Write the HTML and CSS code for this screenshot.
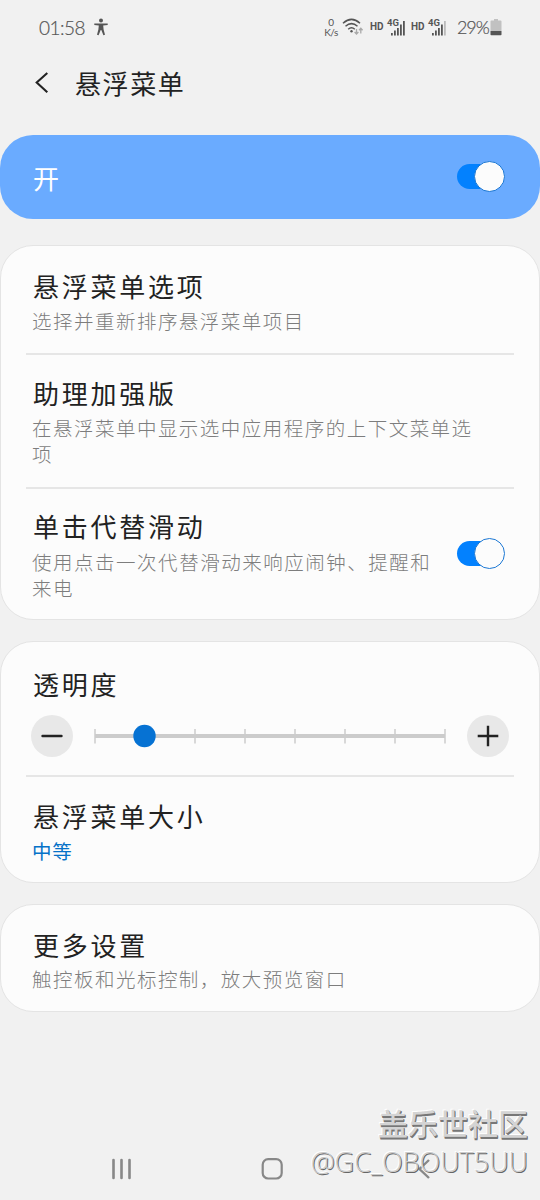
FILE: index.html
```html
<!DOCTYPE html>
<html lang="zh-CN">
<head>
<meta charset="utf-8">
<title>悬浮菜单</title>
<link rel="stylesheet" href="styles.css">
</head>
<body>
<div class="screen">
  <div class="status">
    <span class="clock">01:58</span>
    <svg class="person" width="14" height="18" viewBox="0 0 14 18" fill="#555"><circle cx="7" cy="2.500" r="2"/><path d="M.3 5.500h13.400v1.500l-4.500.5.4 4 1.400 5.200-1.600.5L7.300 12h-.6l-2.100 5.200-1.600-.5 1.400-5.200.4-4-4.500-.5z"/></svg>
    <span class="rate"><span>0</span><span>K/s</span></span>
    <svg class="wifi" width="22" height="18" viewBox="0 0 22 18" fill="none" stroke="#555" stroke-width="1.500"><path d="M1 5.200q8.500-7.600 17 0M3.500 8.300q6-5.300 12 0M6.200 11.200q3.300-2.800 6.600 0"/><circle cx="9.500" cy="13.300" r="1.200" fill="#555" stroke="none"/><path stroke="#aaa" stroke-width="1.300" d="M14.500 11v5M12.600 14l1.900 2 1.900-2M18.800 15.500v-5M17 12.300l1.800-2 1.800 2"/></svg>
    <span class="hd">HD</span>
    <span class="signal"><svg width="20" height="17" viewBox="0 0 20 17" fill="#555"><path d="M5 14h1.800v2.500H5zM8 11.500h1.800v5H8zM11 9h1.800v7.500H11zM14 5.500h1.800v11H14zM17 2h1.800v14.500H17z"/></svg><b>4G</b></span>
    <span class="hd">HD</span>
    <span class="signal"><svg width="20" height="17" viewBox="0 0 20 17" fill="#555"><path d="M5 14h1.800v2.500H5zM8 11.500h1.800v5H8zM11 9h1.800v7.500H11zM14 5.500h1.800v11H14z"/><path fill="#bbb" d="M17 2h1.800v14.500H17z"/></svg><b>4G</b></span>
    <span class="percent">29%</span>
    <svg class="battery" width="12" height="17" viewBox="0 0 12 17"><path fill="#c1c1c1" d="M4 0h4v1.500h2.500q1 0 1 1V12H.5V2.500q0-1 1-1H4z"/><path fill="#555" d="M.5 12h11v3.500q0 .8-.8.8H1.300q-.8 0-.8-.8z"/></svg>
  </div>

  <header class="header">
    <svg width="14" height="22" viewBox="0 0 14 22" fill="none" stroke="#222" stroke-width="2.100"><path d="M12.300 1 1.700 10.500l10.600 9.700"/></svg>
    <h1>悬浮菜单</h1>
  </header>

  <section class="master">
    <span class="master-label">开</span>
    <span class="toggle"></span>
  </section>

  <section class="card card-options">
    <div class="row">
      <div class="title">悬浮菜单选项</div>
      <div class="sub">选择并重新排序悬浮菜单项目</div>
    </div>
    <div class="row row-assistant">
      <div class="title">助理加强版</div>
      <div class="sub"><div>在悬浮菜单中显示选中应用程序的上下文菜单选</div><div>项</div></div>
    </div>
    <div class="row row-tap">
      <div>
        <div class="title">单击代替滑动</div>
        <div class="sub"><div>使用点击一次代替滑动来响应闹钟、提醒和</div><div>来电</div></div>
      </div>
      <span class="toggle"></span>
    </div>
  </section>

  <section class="card card-look">
    <div class="row row-slider">
      <div class="title">透明度</div>
      <div class="slider">
        <span class="round"><svg width="22" height="22" viewBox="0 0 22 22"><path d="M1.500 11h19" stroke="#222" stroke-width="2.400" stroke-linecap="round"/></svg></span>
        <svg class="track" width="354" height="26" viewBox="0 0 354 26"><path d="M2 13h350" stroke="#ccc" stroke-width="4"/><path d="M2 6v14.500M102 6v14.500M152 6v14.500M202 6v14.500M252 6v14.500M302 6v14.500M352 6v14.500" stroke="#ccc" stroke-width="1.500"/><circle cx="51.500" cy="13" r="11.200" fill="#0672d3"/></svg>
        <span class="round"><svg width="22" height="22" viewBox="0 0 22 22"><path d="M.7 11h20.600M11 .7v20.600" stroke="#222" stroke-width="2.400"/></svg></span>
      </div>
    </div>
    <div class="row row-size">
      <div class="title">悬浮菜单大小</div>
      <div class="sub value">中等</div>
    </div>
  </section>

  <section class="card card-more">
    <div class="row">
      <div class="title">更多设置</div>
      <div class="sub">触控板和光标控制，放大预览窗口</div>
    </div>
  </section>

  <nav class="nav">
    <svg width="22" height="22" viewBox="0 0 22 22" stroke="#888" stroke-width="2.600" stroke-linecap="round"><path d="M3.500 2v18M11.500 2v18M19.500 2v18"/></svg>
    <svg width="22" height="22" viewBox="0 0 22 22" fill="none" stroke="#888" stroke-width="2.200"><rect x="1.700" y="1.200" width="19" height="19.300" rx="5.500"/></svg>
    <svg width="14" height="22" viewBox="0 0 14 22" fill="none" stroke="#888" stroke-width="2.400"><path d="M12 2 2.500 11l9.500 9"/></svg>
  </nav>

  <div class="watermark">
    <div class="mark-name">盖乐世社区</div>
    <div class="mark-user">@GC_OBOUT5UU</div>
  </div>
</div>
</body>
</html>
```
FILE: styles.css
```css
* { box-sizing: border-box; }
body { margin: 0; background: #f1f1f1; }
.screen {
  position: relative;
  width: 540px;
  height: 1200px;
  overflow: hidden;
  display: flex;
  flex-direction: column;
  font-family: "Noto Sans CJK SC", sans-serif;
  color: #222;
  white-space: nowrap;
}
.status {
  height: 54px;
  padding-left: 39px;
  display: flex;
  align-items: center;
  color: #555;
  font-family: Lato, sans-serif;
}
.clock { width: 48px; font-size: 19px; font-weight: 300; letter-spacing: -.5px; -webkit-text-stroke: .2px #555; }
.person { margin-left: 7px; }
.rate {
  width: 14px;
  margin-left: 216px;
  display: flex;
  flex-direction: column;
  align-items: center;
  font-size: 10px;
  line-height: 10px;
  letter-spacing: -.5px;
}
.wifi { margin-left: 4px; }
.hd { width: 15px; margin-left: 6px; font: bold 10px/12px Roboto, sans-serif; }
.signal { position: relative; width: 20px; height: 17px; padding-left: 1px; }
.signal svg { display: block; }
.signal b {
  position: absolute;
  left: 2px;
  top: -1px;
  font: bold 9.5px/10px Roboto, sans-serif;
  background: #f1f1f1;
}
.percent { width: 32px; margin-left: 11px; font-size: 18px; font-weight: 300; letter-spacing: -1.1px; -webkit-text-stroke: .2px #555; }
.battery { margin-left: 1px; }
.header { height: 81px; padding: 0 0 24px 35px; display: flex; align-items: center; gap: 26px; }
h1 { margin: 0; font-size: 26px; font-weight: 400; line-height: 38px; letter-spacing: 1.6px; }
.master {
  height: 84px;
  padding: 0 35px 0 33px;
  border-radius: 33px;
  background: #6aabff;
  display: flex;
  align-items: center;
  justify-content: space-between;
}
.master-label { color: #fff; font-size: 26px; line-height: 38px; padding-top: 2px; }
.toggle {
  width: 48px;
  height: 25px;
  border-radius: 13px;
  background: linear-gradient(90deg, #0381fe 36px, transparent 36px);
  display: flex;
  align-items: center;
  justify-content: flex-end;
}
.master .toggle { margin-top: -1px; }
.toggle::after {
  content: "";
  flex: none;
  width: 29px;
  height: 29px;
  border: 1.5px solid #1c78d4;
  border-radius: 50%;
  background: #fcfcfc;
}
.card { background: #fcfcfc; border: 1px solid #e4e4e4; border-radius: 33px; }
.card-options { height: 375px; margin-top: 26px; }
.card-look { height: 242px; margin-top: 21px; }
.card-more { height: 108px; margin-top: 21px; }
.row { position: relative; height: 108px; padding: 22px 32px 0; }
.row + .row::before {
  content: "";
  position: absolute;
  top: -1px;
  left: 25px;
  right: 25px;
  height: 1.5px;
  background: #e6e6e6;
}
.row-assistant { height: 134px; padding-top: 21px; }
.row-tap { height: 131px; padding: 20px 34px 0 32px; display: flex; justify-content: space-between; }
.row-tap .sub { margin-top: 5px; letter-spacing: 1.52px; }
.row-tap .toggle { margin-top: 33px; }
.row-slider { height: 134px; padding: 24px 30px 0; }
.row-slider .title { padding-left: 2px; }
.row-size { padding-top: 22px; }
.title { font-size: 26px; line-height: 36px; letter-spacing: 2.75px; }
.sub {
  margin: 4px 0 0 -1px;
  font-size: 19.5px;
  line-height: 26px;
  letter-spacing: 1.48px;
  font-weight: 300;
  color: #7d7d7d;
}
.value { color: #0672c8; font-weight: 400; letter-spacing: .7px; }
.slider { height: 42px; margin-top: 13px; display: flex; align-items: center; justify-content: space-between; }
.round {
  width: 42px;
  height: 42px;
  border-radius: 50%;
  background: #e8e8e8;
  display: flex;
  align-items: center;
  justify-content: center;
}
.card-more .sub { margin-top: 3px; }
.nav { margin-top: 146px; padding-left: 110px; display: flex; align-items: center; }
.nav svg:nth-child(2) { margin-left: 129px; }
.nav svg:nth-child(3) { margin-left: 134px; }
.watermark { position: absolute; right: 12px; bottom: 19px; text-align: right; color: #d4d4d4; }
.mark-name { font-size: 30px; line-height: 38px; margin-bottom: 2px; font-weight: 500; text-shadow: 1px 1px 0 #777, 1px 2px 0 #777, -1px -1px 0 #fff; }
.mark-user {
  font-family: "Open Sans", sans-serif;
  font-size: 27px;
  font-weight: 300;
  line-height: 38px;
  color: #ccc;
  text-shadow: 1px 1px 0 #666, -1px -1px 0 #fff;
}
```
